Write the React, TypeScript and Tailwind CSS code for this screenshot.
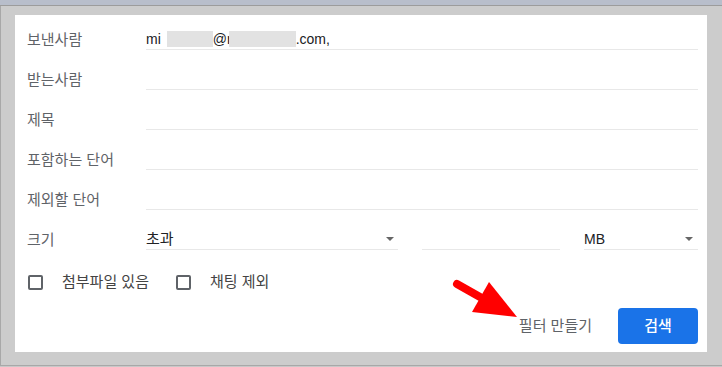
import React from "react";

const FONT = { fontFamily: '"Liberation Sans", Arial, "Noto Sans CJK KR", sans-serif' };

function Caret() {
  return (
    <span className="h-0 w-0 border-l-[4px] border-r-[4px] border-t-[4px] border-l-transparent border-r-transparent border-t-[#666]" />
  );
}

function FieldRow({ label, children }: { label: string; children?: React.ReactNode }) {
  return (
    <div className="flex items-end">
      <div className="w-[119px] shrink-0 text-[15px] leading-[20px] text-[#5f6368]">{label}</div>
      <div className="h-[21px] flex-1 border-b border-[#e8e8e8] leading-[20px] text-[#202124]">
        {children}
      </div>
    </div>
  );
}

function Checkbox({ label }: { label: string }) {
  return (
    <label className="flex items-center gap-[19px]">
      <span className="ml-px h-[15px] w-[15px] rounded-[2px] border-2 border-[#5f6368] bg-white" />
      <span className="text-[15px] leading-[20px] text-[#444]">{label}</span>
    </label>
  );
}

export default function App() {
  return (
    <div
      style={FONT}
      className="relative flex h-[367px] w-[722px] flex-col overflow-hidden bg-[#cccccc] text-[14px]"
    >
      <div className="h-[5px] bg-[#b8becb]" />
      <div className="h-px bg-[#9c9c9c]" />
      <div className="flex flex-1 border-l border-[#a8a8a8] pl-[14px] pr-[15px] pt-[9px]">
        <div className="flex h-[337px] w-[692px] flex-col bg-white pb-[8px] pl-[12px] pr-[9px] pt-[14px]">
          <div className="flex flex-col gap-[19px]">
            <FieldRow label="보낸사람">
              <span>mi</span>
              <span className="inline-block w-[6px]" />
              <span className="inline-block h-[16px] w-[46px] bg-[#e2e2e2] align-[-3px]" />
              <span>@r</span>
              <span className="-ml-[3px] inline-block h-[16px] w-[67px] bg-[#e2e2e2] align-[-3px]" />
              <span>.com,</span>
            </FieldRow>
            <FieldRow label="받는사람" />
            <FieldRow label="제목" />
            <FieldRow label="포함하는 단어" />
            <FieldRow label="제외할 단어" />
            <div className="flex items-end">
              <div className="w-[119px] shrink-0 text-[15px] leading-[20px] text-[#5f6368]">크기</div>
              <div className="flex h-[21px] w-[252px] items-center justify-between border-b border-[#e8e8e8] pr-[4px] leading-[20px] text-[#202124]">
                <span className="text-[15px]">초과</span>
                <Caret />
              </div>
              <div className="ml-[24px] h-[21px] w-[138px] border-b border-[#e8e8e8]" />
              <div className="ml-[24px] flex h-[21px] flex-1 items-center justify-between border-b border-[#e8e8e8] pr-[5px] leading-[20px] text-[#202124]">
                <span>MB</span>
                <Caret />
              </div>
            </div>
          </div>
          <div className="mt-[22px] flex items-center gap-[26px]">
            <Checkbox label="첨부파일 있음" />
            <Checkbox label="채팅 제외" />
          </div>
          <div className="mt-auto flex items-center justify-end gap-[26px]">
            <span className="text-[15px] text-[#5f6368]">필터 만들기</span>
            <button
              type="button"
              className="h-[36px] w-[80px] rounded-[4px] bg-[#1a73e8] text-[15px] font-medium text-white"
            >
              검색
            </button>
          </div>
        </div>
      </div>
      <div className="h-px bg-[#a8a8a8]" />
      <div className="h-px bg-[#c8c8c8]" />
      <svg
        className="absolute left-[448px] top-[276px]"
        width="75"
        height="46"
        viewBox="0 0 75 46"
      >
        <line x1="9" y1="8" x2="32" y2="21" stroke="#ff0000" strokeWidth="8" strokeLinecap="round" />
        <polygon points="41,6 24,36 69,41" fill="#ff0000" />
      </svg>
    </div>
  );
}
